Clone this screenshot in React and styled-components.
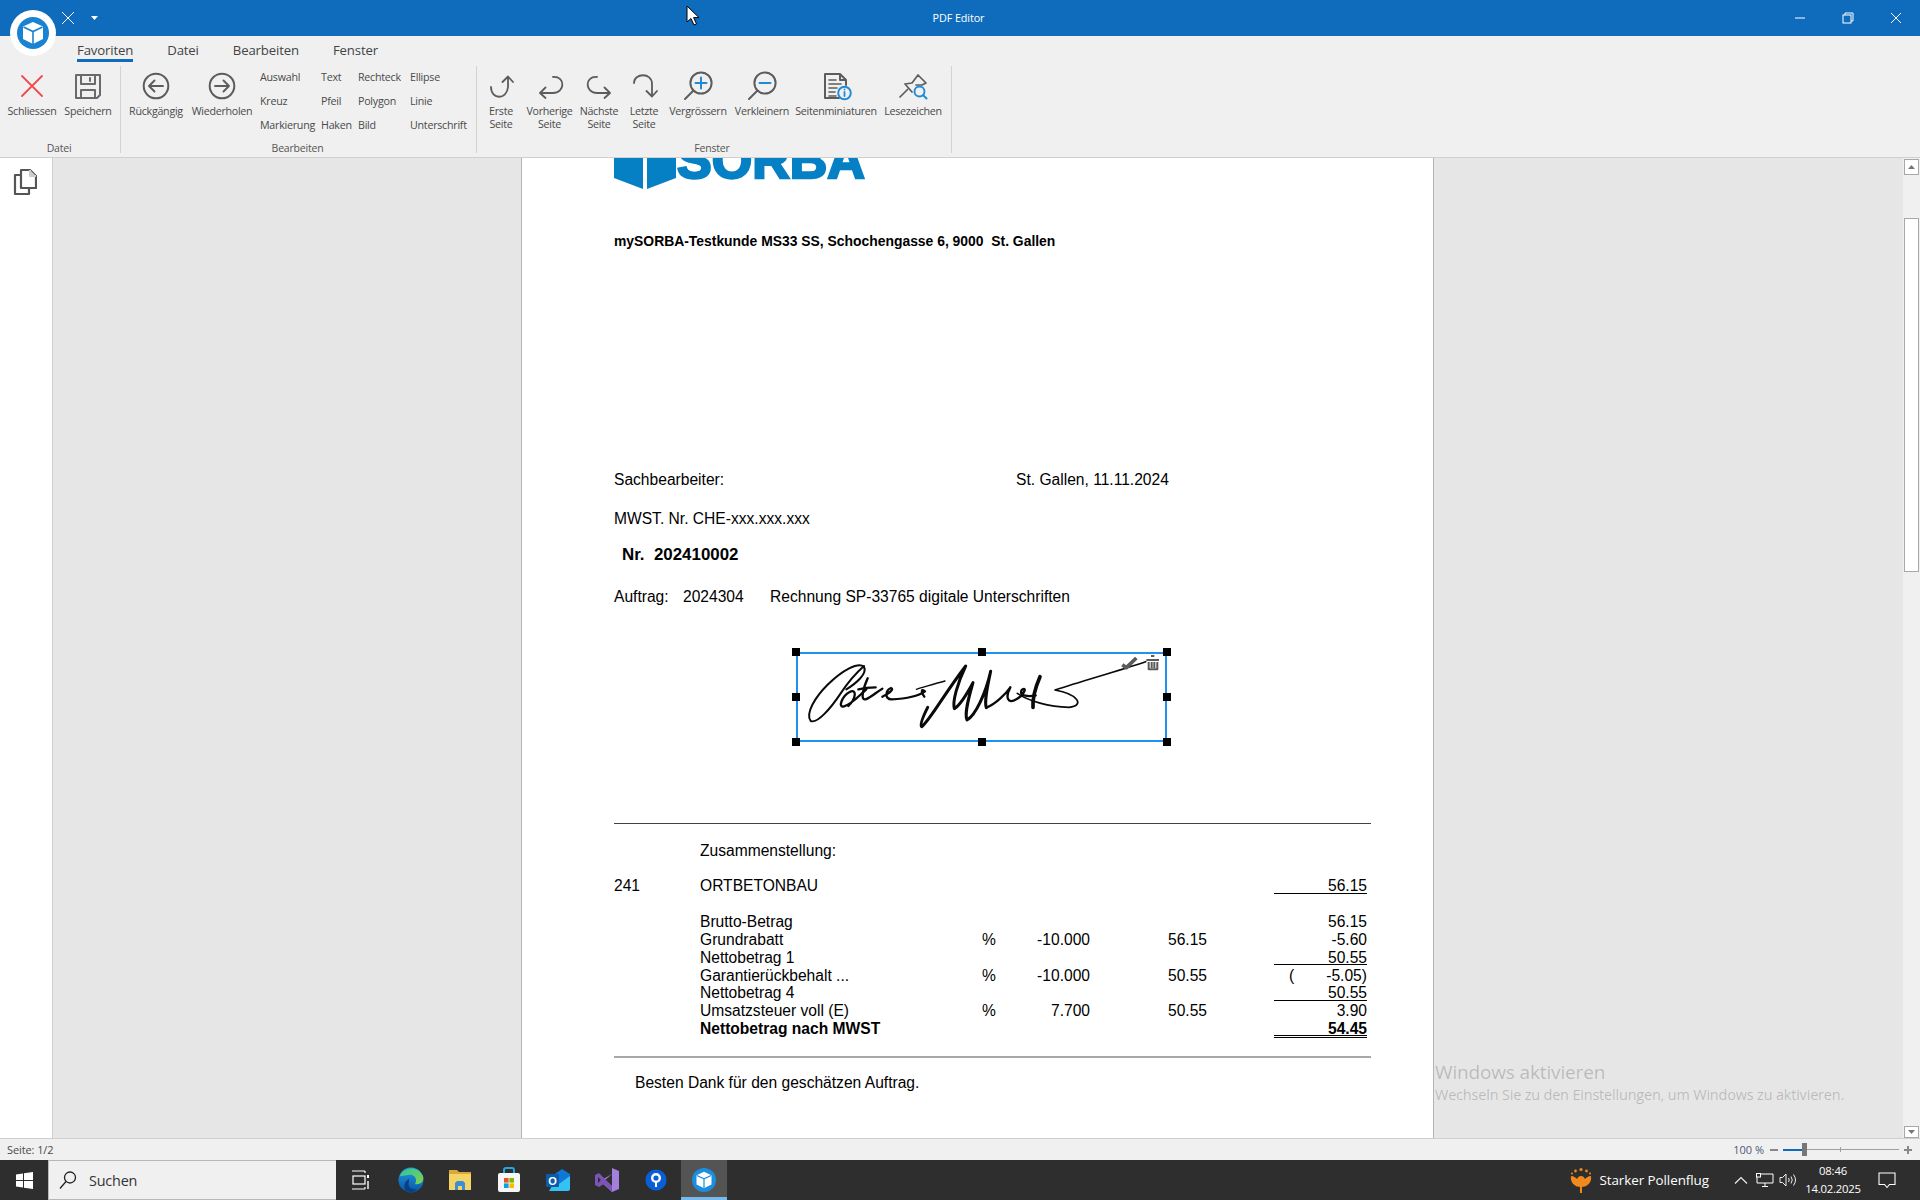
import React from "react";
import styled, { createGlobalStyle } from "styled-components";

const Global = createGlobalStyle`
  html, body { margin: 0; padding: 0; background: #f0f0f0; }
  * { box-sizing: border-box; }
  #root { width: 1920px; height: 1200px; overflow: hidden; }
`;

const ui = `"Open Sans", "Noto Sans", sans-serif`;
const doc = `"Liberation Sans", Arial, sans-serif`;

const Shell = styled.div`
  position: relative;
  width: 1920px;
  height: 1200px;
  display: flex;
  flex-direction: column;
  overflow: hidden;
  font-family: ${ui};
`;

/* ---------- title bar ---------- */
const TitleBar = styled.header`
  position: relative;
  height: 36px;
  flex: none;
  background: #0f6cbd;
  display: flex;
  align-items: center;
  color: #fff;
`;
const QuickTools = styled.div`
  display: flex;
  align-items: center;
  padding-left: 61px;
  gap: 16px;
`;
const TitleText = styled.div`
  position: absolute;
  left: 0;
  right: 3px;
  top: 0;
  line-height: 36px;
  text-align: center;
  font-size: 10.8px;
  letter-spacing: -0.1px;
`;
const WindowButtons = styled.div`
  margin-left: auto;
  display: flex;
`;
const WindowButton = styled.div`
  width: 48px;
  height: 36px;
  display: flex;
  align-items: center;
  justify-content: center;
`;
const AppBadge = styled.div`
  position: absolute;
  left: 10px;
  top: 10px;
  width: 46px;
  height: 46px;
  border-radius: 50%;
  background: #fff;
  display: flex;
  align-items: center;
  justify-content: center;
  z-index: 5;
`;

/* ---------- ribbon ---------- */
const Ribbon = styled.section`
  height: 122px;
  flex: none;
  background: #f0f0f0;
  border-bottom: 1px solid #d0d0d0;
`;
const Tabs = styled.nav`
  height: 26px;
  display: flex;
  padding-left: 77px;
  gap: 34px;
`;
const Tab = styled.div`
  height: 26px;
  padding-top: 4px;
  line-height: 20px;
  font-size: 13.2px;
  letter-spacing: -0.15px;
  color: #444;
  border-bottom: 3px solid ${(p) => (p.$active ? "#0f6cbd" : "transparent")};
`;
const Groups = styled.div`
  margin-top: 4px;
  display: flex;
`;
const Group = styled.div`
  width: ${(p) => p.$w}px;
  height: 87px;
  border-right: 1px solid #d2d2d2;
  display: flex;
  flex-direction: column;
`;
const GroupBody = styled.div`
  height: 75px;
  flex: none;
  display: flex;
  padding-left: ${(p) => p.$pad}px;
`;
const GroupLabel = styled.div`
  line-height: 14px;
  flex: none;
  text-align: center;
  font-size: 10.5px;
  letter-spacing: -0.2px;
  color: #555;
  transform: translateX(${(p) => p.$shift || 0}px);
`;
const BigButton = styled.div`
  width: ${(p) => p.$w}px;
  padding-top: 4px;
  display: flex;
  flex-direction: column;
  align-items: center;
  text-align: center;
`;
const BigLabel = styled.div`
  margin-top: 2.5px;
  line-height: 13px;
  font-size: 10.7px;
  letter-spacing: -0.27px;
  color: #4a4a4a;
  white-space: nowrap;
`;
const SmallColumn = styled.div`
  width: ${(p) => p.$w}px;
  margin-top: -1px;
  margin-left: ${(p) => p.$ml || 0}px;
  display: grid;
  grid-auto-rows: 24px;
`;
const SmallItem = styled.div`
  line-height: 24px;
  font-size: 10.7px;
  letter-spacing: -0.25px;
  color: #4a4a4a;
  white-space: nowrap;
`;

/* ---------- workspace ---------- */
const Workspace = styled.main`
  flex: 1;
  min-height: 0;
  display: flex;
`;
const SideRail = styled.aside`
  width: 53px;
  flex: none;
  background: #fff;
  border-right: 1px solid #cfcfcf;
  padding: 10px 0 0 13px;
`;
const Canvas = styled.div`
  flex: 1;
  min-width: 0;
  background: #e6e6e6;
  overflow: hidden;
  padding-left: 468px;
`;
const Scrollbar = styled.div`
  width: 17px;
  flex: none;
  background: #f0f0f0;
  display: flex;
  flex-direction: column;
  padding: 1px 1px 0 1px;
`;
const ScrollButton = styled.div`
  height: ${(p) => p.$h}px;
  background: #fff;
  border: 1px solid #a8a8a8;
  display: flex;
  align-items: center;
  justify-content: center;
  flex: none;
`;
const ScrollThumb = styled.div`
  margin-top: 43px;
  height: 354px;
  background: #fff;
  border: 1px solid #a8a8a8;
  flex: none;
`;
const ScrollSpacer = styled.div`
  flex: 1;
`;

/* ---------- pdf page ---------- */
const Page = styled.article`
  position: relative;
  width: 913px;
  height: 1100px;
  background: #fff;
  border-left: 1px solid #b4b4b4;
  border-right: 1px solid #b4b4b4;
  padding-left: 92px;
  padding-right: 62px;
  font-family: ${doc};
  font-size: 15.6px;
  color: #000;
`;
const LogoRow = styled.div`
  height: 32px;
  display: flex;
`;
const LogoWord = styled.div`
  margin: -24px 0 0 1px;
  height: 52px;
  line-height: 52px;
  font-size: 52px;
  font-weight: 700;
  letter-spacing: 0;
  color: #0680c4;
  -webkit-text-stroke: 2.4px #0680c4;
`;
const DocLine = styled.div`
  height: 18px;
  line-height: 18px;
  margin-top: ${(p) => p.$top || 0}px;
  padding-left: ${(p) => p.$indent || 0}px;
  font-weight: ${(p) => (p.$bold ? 700 : 400)};
  font-size: ${(p) => p.$size || 15.6}px;
  white-space: pre;
  display: flex;
`;
const Cell = styled.span`
  width: ${(p) => (p.$w ? p.$w + "px" : "auto")};
  flex: none;
`;
const Rule = styled.div`
  margin-top: ${(p) => p.$top}px;
  height: ${(p) => p.$h}px;
  background: ${(p) => p.$color};
`;
const Figures = styled.div`
  display: grid;
  grid-template-columns: 86px 282px 28px 80px 117px 160px;
  grid-auto-rows: ${(p) => p.$row}px;
  margin-top: ${(p) => p.$top}px;
  line-height: 18px;
`;
const Num = styled.div`
  text-align: right;
  font-weight: ${(p) => (p.$bold ? 700 : 400)};
  white-space: pre;
`;
const Text = styled.div`
  font-weight: ${(p) => (p.$bold ? 700 : 400)};
  white-space: pre;
`;
const Sum = styled.div`
  justify-self: end;
  position: relative;
  width: 93px;
  text-align: right;
  font-weight: ${(p) => (p.$bold ? 700 : 400)};
  height: ${(p) => (p.$rule === "double" ? 18 : p.$rule ? 16.5 : 18)}px;
  border-bottom: ${(p) =>
    p.$rule === "double" ? "3px double #000" : p.$rule ? "1px solid #000" : "none"};
`;
const Paren = styled.span`
  position: absolute;
  left: 15px;
`;

/* selection annotation: lies over the page */
const Selection = styled.div`
  position: absolute;
  left: 274px;
  top: 494px;
  width: 371px;
  height: 90px;
  box-shadow: inset 0 0 0 2px #2190ee;
`;
const Handle = styled.i`
  position: absolute;
  width: 8px;
  height: 8px;
  background: #000;
  left: calc(${(p) => p.$x}% - 4px);
  top: calc(${(p) => p.$y}% - 4px);
`;
const SignatureArt = styled.svg`
  position: absolute;
  left: -27px;
  top: -22px;
`;

/* ---------- status bar ---------- */
const StatusBar = styled.footer`
  height: 22px;
  flex: none;
  background: #f0f0f0;
  border-top: 1px solid #cfcfcf;
  display: flex;
  align-items: center;
  padding-left: 7px;
  font-size: 11px;
  letter-spacing: -0.1px;
  color: #4a4a4a;
`;
const ZoomPart = styled.div`
  margin-left: auto;
  display: flex;
  align-items: center;
  color: #4a5a78;
  padding-right: 8px;
  font-size: 11px;
  letter-spacing: 0;
`;
const ZoomSign = styled.span`
  width: 8px;
  height: 2px;
  background: #888;
  margin: 0 ${(p) => p.$mr}px 0 ${(p) => p.$ml}px;
  position: relative;
  &::after {
    content: "";
    display: ${(p) => (p.$plus ? "block" : "none")};
    position: absolute;
    left: 3px;
    top: -3px;
    width: 2px;
    height: 8px;
    background: #888;
  }
`;
const ZoomTrack = styled.div`
  position: relative;
  width: 116px;
  height: 1px;
  background: #a0a0a0;
`;
const ZoomFill = styled.div`
  position: absolute;
  left: 0;
  top: -0.5px;
  width: 21px;
  height: 2px;
  background: #0f6cbd;
`;
const ZoomThumb = styled.div`
  position: absolute;
  left: 19px;
  top: -6px;
  width: 5px;
  height: 13px;
  background: #777;
`;
const ZoomTick = styled.div`
  position: absolute;
  left: 57px;
  top: -2px;
  width: 1px;
  height: 5px;
  background: #a0a0a0;
`;

/* ---------- taskbar ---------- */
const Taskbar = styled.footer`
  height: 40px;
  flex: none;
  background: #2e2e2e;
  display: flex;
  align-items: stretch;
  color: #fff;
`;
const StartButton = styled.div`
  width: 48px;
  display: flex;
  align-items: center;
  justify-content: center;
`;
const SearchBox = styled.div`
  width: 288px;
  background: #f0f0f0;
  border: 1px solid #b8b8b8;
  border-width: 1px 0 1px 1px;
  display: flex;
  align-items: center;
  padding-left: 10px;
  gap: 12px;
  color: #333;
  font-size: 14.4px;
  letter-spacing: -0.2px;
`;
const TaskItem = styled.div`
  width: ${(p) => p.$w || 49}px;
  margin-left: ${(p) => p.$ml || 0}px;
  margin-right: ${(p) => p.$mr || 0}px;
  display: flex;
  align-items: center;
  justify-content: center;
  background: ${(p) => (p.$active ? "#545454" : "transparent")};
  border-bottom: ${(p) => (p.$active ? "3px solid #76b9ed" : "none")};
  padding-top: ${(p) => (p.$active ? 3 : 0)}px;
`;
const Tray = styled.div`
  margin-left: auto;
  display: flex;
  align-items: center;
  padding-right: 9px;
`;
const TrayIcon = styled.div`
  width: ${(p) => p.$w}px;
  display: flex;
  align-items: center;
  justify-content: center;
`;
const TrayText = styled.div`
  font-size: 13.4px;
  letter-spacing: -0.05px;
  margin: 0 20px 0 6px;
  white-space: nowrap;
`;
const Clock = styled.div`
  width: 60px;
  margin-left: 3px;
  text-align: center;
  font-size: 11.3px;
  line-height: 18px;
  letter-spacing: -0.2px;
`;

/* ---------- overlays ---------- */
const Watermark = styled.div`
  position: absolute;
  left: 1435px;
  top: 1058px;
  color: rgba(0, 0, 0, 0.2);
  pointer-events: none;
`;
const WatermarkTitle = styled.div`
  font-size: 19px;
  line-height: 28px;
  letter-spacing: -0.15px;
`;
const WatermarkSub = styled.div`
  font-size: 14.45px;
  line-height: 17px;
  letter-spacing: -0.17px;
`;
const Pointer = styled.svg`
  position: absolute;
  left: 686px;
  top: 5px;
  z-index: 9;
`;

/* ---------- drawings ---------- */
const G = "#5c5c5c";
const Ico = ({ children, s = 32 }) => (
  <svg width={s} height={s} viewBox="0 0 32 32" fill="none" stroke={G} strokeWidth="1.7" strokeLinecap="round" strokeLinejoin="round">
    {children}
  </svg>
);
const CloseX = () => (
  <Ico><path d="M6 6 L26 26 M26 6 L6 26" stroke="#ee4b4f" strokeWidth="1.8" /></Ico>
);
const Floppy = () => (
  <Ico>
    <path d="M4 5 H28 V25 L25 28 H4 Z" strokeWidth="2" stroke="#6a6a6a" />
    <path d="M9 5 V14 H23 V5 M18 8 V11" strokeWidth="2" stroke="#6a6a6a" />
    <path d="M9 28 V20 H23 V28" strokeWidth="2" stroke="#6a6a6a" />
  </Ico>
);
const CircleArrow = ({ right }) => (
  <Ico>
    <circle cx="16" cy="16" r="12.3" strokeWidth="2" />
    {right
      ? <path d="M9 16 H23 M17.5 10.5 L23 16 L17.5 21.5" strokeWidth="1.9" />
      : <path d="M23 16 H9 M14.5 10.5 L9 16 L14.5 21.5" strokeWidth="1.9" />}
  </Ico>
);
const First = () => (
  <Ico><path d="M6 17 C6 30 22 30 23 17 V7 M17.5 12 L23 6.5 L28 12" strokeWidth="1.8" /></Ico>
);
const Prev = () => (
  <Ico><path d="M19 7 C32 6 31 23 19 23 H6 M11.5 17.5 L6 23 L11.5 28" strokeWidth="1.8" /></Ico>
);
const Next = () => (
  <Ico><path d="M14 7 C1 6 2 23 14 23 H27 M21.5 17.5 L27 23 L21.5 28" strokeWidth="1.8" /></Ico>
);
const Last = () => (
  <Ico><path d="M6 13 C6 3 24 2 24 14 V26 M18.5 21 L24 26.5 L29 21" strokeWidth="1.8" /></Ico>
);
const Zoomer = ({ plus }) => (
  <Ico>
    <circle cx="19" cy="13" r="10.6" strokeWidth="2" />
    <path d="M11.5 20.5 L3 29" strokeWidth="2" />
    <path d={plus ? "M13.5 13 H24.5 M19 7.5 V18.5" : "M13.5 13 H24.5"} stroke="#1f8ad6" strokeWidth="2" />
  </Ico>
);
const Thumbs = () => (
  <Ico>
    <path d="M19 28 H5 V4 H20 L26 10 V15 M20 4 V10 H26" strokeWidth="2" />
    <path d="M9 10 H16 M9 14 H21 M9 18 H17 M9 22 H15 M9 26 H16" strokeWidth="1.6" />
    <circle cx="24.5" cy="23" r="6.3" stroke="#1f8ad6" strokeWidth="1.9" fill="#f0f0f0" />
    <path d="M24.5 22 V26 M24.5 19.5 V19.6" stroke="#1f8ad6" strokeWidth="1.8" />
  </Ico>
);
const Bookmark = () => (
  <Ico>
    <path d="M8 14 L15 13 L21 5 L29 13 L25 15 L19 15 M8 14 L15 22 M10.5 19.5 L3 27" strokeWidth="1.7" />
    <circle cx="22.5" cy="21.5" r="5" stroke="#1f8ad6" strokeWidth="1.9" />
    <path d="M26 25 L29.5 28.5" stroke="#1f8ad6" strokeWidth="2" />
  </Ico>
);
const CopyPages = () => (
  <svg width="24" height="28" viewBox="0 0 24 28" fill="none" stroke="#555" strokeWidth="2.2" strokeLinejoin="round">
    <path d="M8 2 H17 L23 8 V20 H8 Z" />
    <path d="M17 2 V8 H23" fill="#ccc" stroke="#ccc" />
    <path d="M8 7 H2 V26 H16 V20" />
  </svg>
);
const CubeMark = ({ size, bg = "#1a82d2" }) => (
  <svg width={size} height={size} viewBox="0 0 32 32">
    <circle cx="16" cy="16" r="16" fill={bg} />
    <path d="M16 5 L26 9.5 V22 L16 27 L6 22 V9.5 Z" fill="#fff" />
    <path d="M6.5 10 L16 14.5 L25.5 10 M16 14.5 V27" fill="none" stroke={bg} strokeWidth="1.6" />
  </svg>
);
const Shield = () => (
  <svg width="62" height="32" viewBox="0 0 62 32">
    <path d="M0 0 H29 V31 L0 20 Z M33 0 H62 V20 L33 31 Z" fill="#0680c4" />
  </svg>
);
const WinLogo = () => (
  <svg width="17" height="17" viewBox="0 0 17 17" fill="#fff">
    <path d="M0 2.4 L7 1.4 V8 H0 Z M8 1.2 L17 0 V8 H8 Z M0 9 H7 V15.6 L0 14.6 Z M8 9 H17 V17 L8 15.8 Z" />
  </svg>
);
const SearchGlass = () => (
  <svg width="18" height="20" viewBox="0 0 18 20" fill="none" stroke="#222" strokeWidth="1.3">
    <circle cx="11" cy="7.5" r="5.5" />
    <path d="M7 11.5 L1 18.5" />
  </svg>
);
const TaskView = () => (
  <svg width="18" height="20" viewBox="0 0 18 20" fill="none" stroke="#fff" strokeWidth="1.2">
    <path d="M0 1 H13 M0 19 H13" />
    <rect x="1" y="6" width="12" height="8" />
    <rect x="15" y="5" width="2" height="3" fill="#fff" stroke="none" />
    <path d="M16 11 V19" strokeWidth="1.4" />
    <path d="M13 1 V3 M13 17 V19" />
  </svg>
);
const Edge = () => (
  <svg width="26" height="26" viewBox="0 0 26 26">
    <defs>
      <linearGradient id="edgeA" x1="0" y1="0" x2="1" y2="1">
        <stop offset="0" stopColor="#2ec4a0" />
        <stop offset="1" stopColor="#7fd34e" />
      </linearGradient>
      <linearGradient id="edgeB" x1="0" y1="0" x2="0" y2="1">
        <stop offset="0" stopColor="#1c9ce0" />
        <stop offset="1" stopColor="#0b55a6" />
      </linearGradient>
    </defs>
    <circle cx="13" cy="13" r="12.5" fill="url(#edgeB)" />
    <path d="M2 9 C5 0 20 -2 25 9 C26.5 15 22 18 17 17 C20 12 16 7 11 8 C7 8.5 4 9 2 9 Z" fill="url(#edgeA)" />
    <path d="M11 15 C9 19 13 23 19 22.5 C17 25 12 26 8 24 C5 21 6 14 11 12 Z" fill="#0b3f84" />
  </svg>
);
const Folder = () => (
  <svg width="24" height="22" viewBox="0 0 24 22">
    <path d="M1 1 H9 L11 3 H23 V6 H1 Z" fill="#d8a93a" />
    <rect x="1" y="5" width="22" height="16" fill="#f6d365" />
    <path d="M7 21 V14 L9 12 H15 L17 14 V21 H14 V17 H10 V21 Z" fill="#3a8fd8" />
  </svg>
);
const Store = () => (
  <svg width="24" height="26" viewBox="0 0 24 26">
    <path d="M7 7 V3 Q7 1 9 1 H15 Q17 1 17 3 V7" fill="none" stroke="#23a7e0" strokeWidth="2" />
    <rect x="1" y="6" width="22" height="19" rx="2" fill="#f6f6f6" />
    <rect x="7" y="11" width="4.6" height="4.6" fill="#f25022" />
    <rect x="12.4" y="11" width="4.6" height="4.6" fill="#7fba00" />
    <rect x="7" y="16.4" width="4.6" height="4.6" fill="#00a4ef" />
    <rect x="12.4" y="16.4" width="4.6" height="4.6" fill="#ffb900" />
  </svg>
);
const Outlook = () => (
  <svg width="26" height="24" viewBox="0 0 26 24">
    <path d="M7 8 L17 1 L25 6 V18 H7 Z" fill="#0f78d4" />
    <path d="M11 18 L25 8 V21 Q25 23 23 23 H4 L7 18 Z" fill="#35c1f1" />
    <rect x="1" y="6" width="13" height="13" rx="1" fill="#0a5ca8" />
    <text x="7.5" y="16.5" textAnchor="middle" fontFamily="Liberation Sans, sans-serif" fontWeight="700" fontSize="11" fill="#fff">O</text>
  </svg>
);
const VisualStudio = () => (
  <svg width="24" height="24" viewBox="0 0 24 24">
    <path d="M17 0 L24 3 V21 L17 24 L5 13 L17 6 Z" fill="#a57fdc" />
    <path d="M17 6 V18 L10 12 Z" fill="#2e2e2e" />
    <path d="M0 7 L4 5 L17 18 V24 L9 16 L4 19 L0 17 Z M3 9 V15 L6 12 Z" fill="#7a55b5" fillRule="evenodd" />
  </svg>
);
const MapPin = () => (
  <svg width="22" height="22" viewBox="0 0 22 22">
    <circle cx="11" cy="11" r="10.5" fill="#0a5fd9" />
    <circle cx="11" cy="9" r="3.8" fill="none" stroke="#fff" strokeWidth="2.4" />
    <path d="M11 12 V18" stroke="#fff" strokeWidth="2" />
  </svg>
);
const Pollen = () => (
  <svg width="24" height="26" viewBox="0 0 24 26" fill="#f08a1e">
    <path d="M2 9 C5 9 7 11 8 12 C9 10 10 9 12 9 C14 9 15 10 16 12 C17 11 19 9 22 9 C23 15 19 20 12 20 C5 20 1 15 2 9 Z" />
    <rect x="11" y="19" width="2" height="7" />
    <circle cx="12" cy="2.5" r="1.6" /><circle cx="6.5" cy="4" r="1.4" /><circle cx="17.5" cy="4" r="1.4" />
    <circle cx="3" cy="6.5" r="1" /><circle cx="21" cy="6.5" r="1" />
  </svg>
);
const Chevron = () => (
  <svg width="14" height="8" viewBox="0 0 14 8" fill="none" stroke="#eee" strokeWidth="1.2"><path d="M1 7.5 L7 1.5 L13 7.5" /></svg>
);
const Network = () => (
  <svg width="18" height="14" viewBox="0 0 18 14" fill="none" stroke="#fff" strokeWidth="1">
    <path d="M4.5 1 H17 V10 H1 V4" />
    <path d="M6 13.5 H12 M9 10 V13.5" />
    <rect x="0.5" y="0.5" width="4" height="3.5" />
  </svg>
);
const Volume = () => (
  <svg width="18" height="14" viewBox="0 0 18 14" fill="none" stroke="#eee" strokeWidth="1">
    <path d="M1 4.5 H3.5 L7 1 V13 L3.5 9.5 H1 Z" />
    <path d="M9.5 5 Q11 7 9.5 9 M12 3.5 Q14.5 7 12 10.5 M14.5 1.5 Q18.5 7 14.5 12.5" />
  </svg>
);
const Bubble = () => (
  <svg width="18" height="17" viewBox="0 0 18 17" fill="none" stroke="#fff" strokeWidth="1.1">
    <path d="M1 1 H17 V12.5 H11.5 L9 15.5 L6.5 12.5 H1 Z" />
  </svg>
);
const Signature = () => (
  <SignatureArt width="420" height="130" viewBox="0 0 1260 390" fill="none" stroke="#0a0a0a" strokeWidth="7" strokeLinecap="round" strokeLinejoin="round">
    <path d="M232 178 C262 160 296 130 285 110 C268 95 220 120 175 165 C140 200 108 250 125 273 C145 282 185 235 215 190 C235 160 260 130 285 108" strokeWidth="6" />
    <path d="M238 228 C262 205 264 175 242 186 C220 197 205 235 225 229 C250 222 272 195 292 178" />
    <path d="M296 145 C284 172 272 212 290 208 C310 200 322 186 340 176" />
    <path d="M268 178 C290 172 306 172 320 172" />
    <path d="M340 200 C362 188 376 178 366 174 C350 180 345 208 368 208 C410 206 448 198 468 184 C452 172 460 192 466 200" />
    <path d="M442 178 C470 170 500 160 528 153" strokeWidth="4" />
    <path d="M476 232 C462 260 452 285 458 290 C480 275 520 200 590 108 C565 160 550 215 556 236 C575 225 600 180 612 158 C600 200 585 250 594 270 C620 255 650 190 665 124 C655 170 645 215 652 233" strokeWidth="9" />
    <path d="M652 233 C680 222 712 190 724 172 C708 202 716 224 742 208 C766 194 776 168 758 180 C748 200 782 200 800 196" strokeWidth="7" />
    <path d="M813 140 C800 170 790 200 792 232" strokeWidth="11" />
    <path d="M745 190 C780 214 840 230 900 232 C950 226 925 192 858 180 C950 150 1040 125 1130 95" strokeWidth="5" />
    <path d="M1060 104 L1072 113 L1102 84" stroke="#5a5a5a" strokeWidth="11" strokeLinecap="butt" />
    <g stroke="#5a5a5a" strokeWidth="6" strokeLinecap="butt">
      <path d="M1132 90 H1170 M1146 78 H1156" />
      <path d="M1139 96 V118 H1165 V96 M1148 96 V114 M1156 96 V114" />
    </g>
  </SignatureArt>
);

const handles = [[0, 0], [50, 0], [100, 0], [0, 50], [100, 50], [0, 100], [50, 100], [100, 100]];

const figures = [
  { label: "Brutto-Betrag", sum: "56.15" },
  { label: "Grundrabatt", pct: "%", rate: "-10.000", base: "56.15", sum: "-5.60" },
  { label: "Nettobetrag 1", sum: "50.55", rule: "single" },
  { label: "Garantierückbehalt ...", pct: "%", rate: "-10.000", base: "50.55", sum: "-5.05)", paren: true },
  { label: "Nettobetrag 4", sum: "50.55", rule: "single" },
  { label: "Umsatzsteuer voll (E)", pct: "%", rate: "7.700", base: "50.55", sum: "3.90" },
  { label: "Nettobetrag nach MWST", sum: "54.45", rule: "double", bold: true },
];

const favItems = [
  ["Auswahl", "Kreuz", "Markierung"],
  ["Text", "Pfeil", "Haken"],
  ["Rechteck", "Polygon", "Bild"],
  ["Ellipse", "Linie", "Unterschrift"],
];
const smallWidths = [61, 37, 52, 60];

const pageButtons = [
  { w: 46, t: ["Erste", "Seite"], i: <First /> },
  { w: 51, t: ["Vorherige", "Seite"], i: <Prev /> },
  { w: 48, t: ["Nächste", "Seite"], i: <Next /> },
  { w: 42, t: ["Letzte", "Seite"], i: <Last /> },
  { w: 66, t: ["Vergrössern"], i: <Zoomer plus /> },
  { w: 62, t: ["Verkleinern"], i: <Zoomer /> },
  { w: 86, t: ["Seitenminiaturen"], i: <Thumbs /> },
  { w: 68, t: ["Lesezeichen"], i: <Bookmark /> },
];

const Big = ({ w, icon, lines }) => (
  <BigButton $w={w}>
    {icon}
    <BigLabel>
      {lines.map((l, i) => (
        <div key={i}>{l}</div>
      ))}
    </BigLabel>
  </BigButton>
);

export default function App() {
  return (
    <Shell>
      <Global />
      <TitleBar>
        <QuickTools>
          <svg width="14" height="14" viewBox="0 0 14 14" stroke="#fff" strokeWidth="1"><path d="M1 1 L13 13 M13 1 L1 13" /></svg>
          <svg width="7" height="4" viewBox="0 0 7 4" fill="#fff"><path d="M0 0 H7 L3.5 4 Z" /></svg>
        </QuickTools>
        <TitleText>PDF Editor</TitleText>
        <WindowButtons>
          <WindowButton>
            <svg width="12" height="2" viewBox="0 0 12 2" stroke="#fff" strokeWidth="1"><path d="M1 1 H11" /></svg>
          </WindowButton>
          <WindowButton>
            <svg width="12" height="12" viewBox="0 0 12 12" fill="none" stroke="#fff" strokeWidth="1"><rect x="1" y="3" width="8" height="8" /><path d="M3 3 V1 H11 V9 H9" /></svg>
          </WindowButton>
          <WindowButton>
            <svg width="12" height="12" viewBox="0 0 12 12" stroke="#fff" strokeWidth="1"><path d="M1 1 L11 11 M11 1 L1 11" /></svg>
          </WindowButton>
        </WindowButtons>
      </TitleBar>
      <AppBadge><CubeMark size={32} /></AppBadge>

      <Ribbon>
        <Tabs>
          <Tab $active>Favoriten</Tab>
          <Tab>Datei</Tab>
          <Tab>Bearbeiten</Tab>
          <Tab>Fenster</Tab>
        </Tabs>
        <Groups>
          <Group $w={121}>
            <GroupBody $pad={4}>
              <Big w={56} icon={<CloseX />} lines={["Schliessen"]} />
              <Big w={56} icon={<Floppy />} lines={["Speichern"]} />
            </GroupBody>
            <GroupLabel $shift={-1}>Datei</GroupLabel>
          </Group>
          <Group $w={356}>
            <GroupBody $pad={2}>
              <Big w={66} icon={<CircleArrow />} lines={["Rückgängig"]} />
              <Big w={66} icon={<CircleArrow right />} lines={["Wiederholen"]} />
              {favItems.map((col, i) => (
                <SmallColumn key={i} $w={smallWidths[i]} $ml={i === 0 ? 5 : 0}>
                  {col.map((t) => (
                    <SmallItem key={t}>{t}</SmallItem>
                  ))}
                </SmallColumn>
              ))}
            </GroupBody>
            <GroupLabel $shift={-1}>Bearbeiten</GroupLabel>
          </Group>
          <Group $w={475}>
            <GroupBody $pad={1}>
              {pageButtons.map((b) => (
                <Big key={b.t[0]} w={b.w} icon={b.i} lines={b.t} />
              ))}
            </GroupBody>
            <GroupLabel $shift={-2}>Fenster</GroupLabel>
          </Group>
        </Groups>
      </Ribbon>

      <Workspace>
        <SideRail><CopyPages /></SideRail>
        <Canvas>
          <Page>
            <LogoRow>
              <Shield />
              <LogoWord>SORBA</LogoWord>
            </LogoRow>
            <DocLine $top={42} $bold $size={13.9}>mySORBA-Testkunde MS33 SS, Schochengasse 6, 9000  St. Gallen</DocLine>
            <DocLine $top={221}>
              <Cell $w={402}>Sachbearbeiter:</Cell>
              <Cell>St. Gallen, 11.11.2024</Cell>
            </DocLine>
            <DocLine $top={21}>MWST. Nr. CHE-xxx.xxx.xxx</DocLine>
            <DocLine $top={18} $bold $indent={8} $size={16.9}>Nr.  202410002</DocLine>
            <DocLine $top={24}>
              <Cell $w={69}>Auftrag:</Cell>
              <Cell $w={87}>2024304</Cell>
              <Cell>Rechnung SP-33765 digitale Unterschriften</Cell>
            </DocLine>
            <Rule $top={217} $h={1} $color="#444" />
            <DocLine $top={18} $indent={86}>Zusammenstellung:</DocLine>
            <Figures $top={17} $row={18}>
              <Text>241</Text>
              <Text>ORTBETONBAU</Text>
              <span /><span /><span />
              <Sum $rule="single">56.15</Sum>
            </Figures>
            <Figures $top={18} $row={17.85}>
              {figures.map((f) => (
                <React.Fragment key={f.label}>
                  <span />
                  <Text $bold={f.bold}>{f.label}</Text>
                  <Text>{f.pct}</Text>
                  <Num>{f.rate}</Num>
                  <Num>{f.base}</Num>
                  <Sum $rule={f.rule} $bold={f.bold}>
                    {f.paren && <Paren>(</Paren>}
                    {f.sum}
                  </Sum>
                </React.Fragment>
              ))}
            </Figures>
            <Rule $top={18} $h={2} $color="#a8a8a8" />
            <DocLine $top={16} $indent={21}>Besten Dank für den geschätzen Auftrag.</DocLine>
            <Selection>
              <Signature />
              {handles.map(([x, y]) => (
                <Handle key={`${x}-${y}`} $x={x} $y={y} />
              ))}
            </Selection>
          </Page>
        </Canvas>
        <Scrollbar>
          <ScrollButton $h={16}>
            <svg width="7" height="4" viewBox="0 0 7 4" fill="#777"><path d="M3.5 0 L7 4 H0 Z" /></svg>
          </ScrollButton>
          <ScrollThumb />
          <ScrollSpacer />
          <ScrollButton $h={12}>
            <svg width="7" height="4" viewBox="0 0 7 4" fill="#777"><path d="M0 0 H7 L3.5 4 Z" /></svg>
          </ScrollButton>
        </Scrollbar>
      </Workspace>

      <StatusBar>
        Seite: 1/2
        <ZoomPart>
          100 %
          <ZoomSign $ml={6} $mr={5} />
          <ZoomTrack>
            <ZoomFill />
            <ZoomTick />
            <ZoomThumb />
          </ZoomTrack>
          <ZoomSign $plus $ml={5} $mr={0} />
        </ZoomPart>
      </StatusBar>

      <Taskbar>
        <StartButton><WinLogo /></StartButton>
        <SearchBox><SearchGlass />Suchen</SearchBox>
        <TaskItem $w={50}><TaskView /></TaskItem>
        <TaskItem><Edge /></TaskItem>
        <TaskItem><Folder /></TaskItem>
        <TaskItem><Store /></TaskItem>
        <TaskItem><Outlook /></TaskItem>
        <TaskItem><VisualStudio /></TaskItem>
        <TaskItem><MapPin /></TaskItem>
        <TaskItem $active $w={46} $ml={1} $mr={2}><CubeMark size={24} bg="#1c8ee0" /></TaskItem>
        <Tray>
          <TrayIcon $w={24}><Pollen /></TrayIcon>
          <TrayText>Starker Pollenflug</TrayText>
          <TrayIcon $w={24}><Chevron /></TrayIcon>
          <TrayIcon $w={23}><Network /></TrayIcon>
          <TrayIcon $w={24}><Volume /></TrayIcon>
          <Clock>08:46<br />14.02.2025</Clock>
          <TrayIcon $w={48}><Bubble /></TrayIcon>
        </Tray>
      </Taskbar>

      <Watermark>
        <WatermarkTitle>Windows aktivieren</WatermarkTitle>
        <WatermarkSub>Wechseln Sie zu den Einstellungen, um Windows zu aktivieren.</WatermarkSub>
      </Watermark>
      <Pointer width="16" height="22" viewBox="0 0 16 22">
        <path d="M1 1 V17 L5 13.5 L8 20 L10.5 19 L7.6 12.6 L13 12.6 Z" fill="#fff" stroke="#000" strokeWidth="1" />
      </Pointer>
    </Shell>
  );
}
